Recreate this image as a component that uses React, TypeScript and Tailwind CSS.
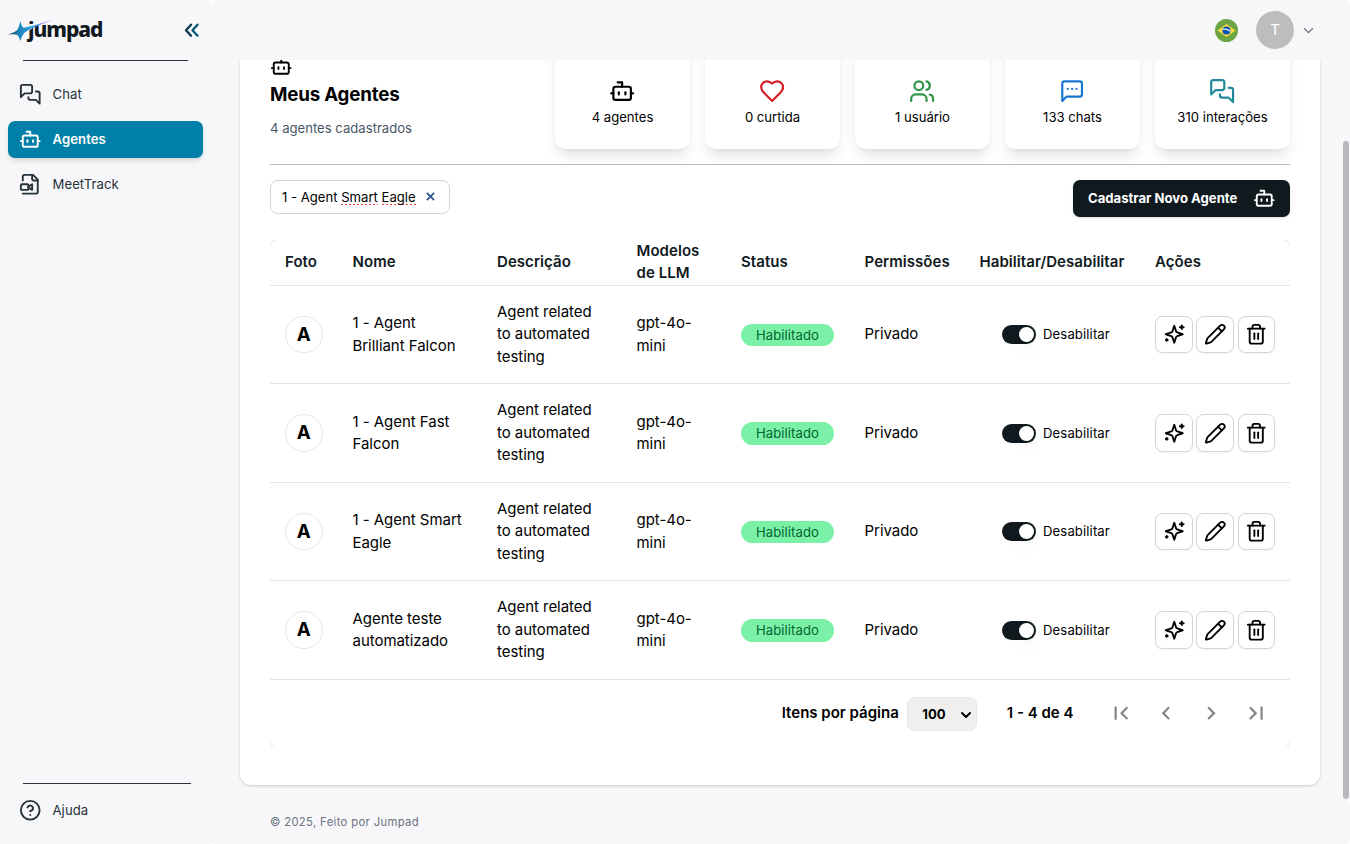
import React from "react";

type IconProps = { className?: string; sw?: number; children?: React.ReactNode };

function Icon({ className = "", sw = 2, children }: IconProps) {
  return (
    <svg viewBox="0 0 24 24" fill="none" stroke="currentColor" strokeWidth={sw} strokeLinecap="round" strokeLinejoin="round" className={"block shrink-0 " + className}>
      {children}
    </svg>
  );
}

const Bot = (p: IconProps) => (
  <Icon {...p}>
    <path d="M12 8V4H8" />
    <rect width="16" height="12" x="4" y="8" rx="2" />
    <path d="M2 14h2" /><path d="M20 14h2" /><path d="M15 13v2" /><path d="M9 13v2" />
  </Icon>
);
const Messages = (p: IconProps) => (
  <Icon {...p}>
    <path d="M14 9a2 2 0 0 1-2 2H6l-4 4V4a2 2 0 0 1 2-2h8a2 2 0 0 1 2 2z" />
    <path d="M18 9h2a2 2 0 0 1 2 2v11l-4-4h-6a2 2 0 0 1-2-2v-1" />
  </Icon>
);
const MessageMore = (p: IconProps) => (
  <Icon {...p}>
    <path d="M21 15a2 2 0 0 1-2 2H7l-4 4V5a2 2 0 0 1 2-2h14a2 2 0 0 1 2 2z" />
    <path d="M8 10h.01" /><path d="M12 10h.01" /><path d="M16 10h.01" />
  </Icon>
);
const FileVideo = (p: IconProps) => (
  <Icon {...p}>
    <path d="M4 22h14a2 2 0 0 0 2-2V7l-5-5H6a2 2 0 0 0-2 2v4" />
    <path d="M14 2v4a2 2 0 0 0 2 2h4" />
    <rect width="8" height="6" x="2" y="12" rx="1" />
    <path d="m10 15.500 4 2.500v-6l-4 2.500" />
  </Icon>
);
const Heart = (p: IconProps) => (
  <Icon {...p}>
    <path d="M19 14c1.490-1.460 3-3.210 3-5.500A5.500 5.500 0 0 0 16.500 3c-1.760 0-3 .5-4.500 2-1.500-1.500-2.740-2-4.500-2A5.500 5.500 0 0 0 2 8.500c0 2.300 1.500 4.050 3 5.500l7 7Z" />
  </Icon>
);
const Users = (p: IconProps) => (
  <Icon {...p}>
    <path d="M16 21v-2a4 4 0 0 0-4-4H6a4 4 0 0 0-4 4v2" />
    <circle cx="9" cy="7" r="4" />
    <path d="M22 21v-2a4 4 0 0 0-3-3.870" /><path d="M16 3.130a4 4 0 0 1 0 7.750" />
  </Icon>
);
const Help = (p: IconProps) => (
  <Icon {...p}>
    <circle cx="12" cy="12" r="10" />
    <path d="M9.090 9a3 3 0 0 1 5.830 1c0 2-3 3-3 3" /><path d="M12 17h.01" />
  </Icon>
);
const Sparkles = (p: IconProps) => (
  <Icon {...p}>
    <path d="m12 3-1.900 5.800a2 2 0 0 1-1.287 1.288L3 12l5.800 1.900a2 2 0 0 1 1.288 1.287L12 21l1.900-5.800a2 2 0 0 1 1.287-1.288L21 12l-5.800-1.900a2 2 0 0 1-1.288-1.287Z" />
    <path d="M20 2.500v4" /><path d="M22 4.500h-4" /><path d="M4 17v2" /><path d="M5 18H3" />
  </Icon>
);
const Pencil = (p: IconProps) => (
  <Icon {...p}>
    <path d="M21.174 6.812a1 1 0 0 0-3.986-3.987L3.842 16.174a2 2 0 0 0-.5.830l-1.321 4.352a.5.5 0 0 0 .623.622l4.353-1.320a2 2 0 0 0 .830-.497z" />
    <path d="m15 5 4 4" />
  </Icon>
);
const Trash = (p: IconProps) => (
  <Icon {...p}>
    <path d="M3 6h18" /><path d="M19 6v14c0 1-1 2-2 2H7c-1 0-2-1-2-2V6" />
    <path d="M8 6V4c0-1 1-2 2-2h4c1 0 2 1 2 2v2" /><path d="M10 11v6" /><path d="M14 11v6" />
  </Icon>
);

function Logo() {
  return (
    <div className="relative h-[30px] w-[98px]">
      <span className="absolute left-[20px] top-px font-['Noto_Sans',sans-serif] text-[21px] leading-[26px] font-extrabold tracking-[-1.050px] text-[#11191f]">jumpad</span>
      <svg viewBox="0 0 50 24" className="absolute top-[3px] left-0 h-[24px] w-[50px]">
        <defs>
          <linearGradient id="star" x1="0" y1="0" x2="1" y2="0">
            <stop offset="0" stopColor="#12304a" /><stop offset="0.220" stopColor="#1b7fb5" />
            <stop offset="0.500" stopColor="#2aa5e6" /><stop offset="0.780" stopColor="#7b74e0" /><stop offset="1" stopColor="#e2b5ec" />
          </linearGradient>
        </defs>
        <path d="M18 14.500 L22 6.500 L28 5 L27 8.500 L24 10.500 Z" fill="#f7f7f9" />
        <path d="M0 16.500 Q8 14 9.500 11.500 Q11.500 8 12.300 3 Q13.300 8 15.500 9.700 Q30 7 46.500 1 Q32 6.800 24 10.300 Q17.500 13.300 15.500 16 Q13.500 18.500 12.300 23 Q11.200 18.500 9.500 17 Q7 16 0 16.500 Z" fill="url(#star)" />
      </svg>
    </div>
  );
}

function NavItem({ icon, label, active = false }: { icon: React.ReactNode; label: string; active?: boolean }) {
  return (
    <div className={"flex h-[37px] w-[195px] items-center gap-[11px] rounded-[7px] pl-[11px] text-[13.125px] tracking-[0.080px] " + (active ? "bg-[#0080a8] font-semibold text-white shadow-md" : "text-[#26323a]")}>
      {icon}
      <span>{label}</span>
    </div>
  );
}

function Stat({ icon, label }: { icon: React.ReactNode; label: string }) {
  return (
    <div className="flex h-[119px] w-[135px] flex-col items-center justify-center gap-px rounded-[11px] bg-white pt-[41px] pb-[14px] text-[13.125px] leading-[22px] shadow-[0_10px_15px_-3px_rgba(0,0,0,0.1),0_4px_6px_-4px_rgba(0,0,0,0.1)]">
      {icon}
      <span>{label}</span>
    </div>
  );
}

const cols = "grid grid-cols-[67.500px_144.500px_139.500px_104.500px_123.500px_115px_175.500px_150px] items-center";

const agents: [string, string][] = [
  ["1 - Agent", "Brilliant Falcon"],
  ["1 - Agent Fast", "Falcon"],
  ["1 - Agent Smart", "Eagle"],
  ["Agente teste", "automatizado"],
];

function ActionButton({ children }: { children: React.ReactNode }) {
  return <button className="flex h-[37.500px] w-[37.500px] shrink-0 items-center justify-center rounded-[7.500px] border border-[#d1d5db] bg-white shadow-xs">{children}</button>;
}

function Row({ name }: { name: [string, string] }) {
  return (
    <div className={cols + " h-[98.500px] shrink-0 border-b border-[#e2e4e6] leading-[22.500px] tracking-[-0.040px]"}>
      <div className="pl-[15px]">
        <div className="flex h-[37.500px] w-[37.500px] items-center justify-center rounded-full border border-[#e5e7eb] pt-px text-[18.750px] font-bold">A</div>
      </div>
      <div className="pl-[15px]">{name[0]}<br />{name[1]}</div>
      <div className="pl-[15px]">Agent related<br />to automated<br />testing</div>
      <div className="pl-[15px]">gpt-4o-<br />mini</div>
      <div className="pt-px pl-[15px]">
        <div className="flex h-[22.500px] w-[93px] items-center justify-center rounded-full bg-[#7bf1a8] text-[13.125px] tracking-[0.080px] text-[#016630]">Habilitado</div>
      </div>
      <div className="pl-[15px]">Privado</div>
      <div className="flex items-center gap-[7px] pl-[37.500px] text-[13.125px] tracking-[0.120px]">
        <div className="flex h-[19px] w-[34px] items-center justify-end rounded-full bg-[#0f191e] p-[2px]">
          <div className="h-[15px] w-[15px] rounded-full bg-white shadow-lg" />
        </div>
        Desabilitar
      </div>
      <div className="flex gap-[3.750px] pl-[15.100px]">
        <ActionButton><Sparkles className="size-[22.500px]" /></ActionButton>
        <ActionButton><Pencil className="size-[22.500px]" /></ActionButton>
        <ActionButton><Trash className="size-[22.500px]" /></ActionButton>
      </div>
    </div>
  );
}

function Flag() {
  return (
    <svg viewBox="0 0 36 36" className="size-[23px]">
      <circle cx="18" cy="18" r="18" fill="#6da544" />
      <path d="M18 8 32 18 18 28 4 18Z" fill="#ffda44" />
      <circle cx="18" cy="18" r="6.300" fill="#0052b4" />
      <path d="M12 16.200q7-1.500 12 3" stroke="#f0f0f0" strokeWidth="1.800" fill="none" />
    </svg>
  );
}

function Misspelled({ children }: { children: React.ReactNode }) {
  return <span className="bg-[repeating-linear-gradient(90deg,#f03c3c_0_2px,transparent_2px_4px)] bg-[length:100%_1px] bg-bottom bg-no-repeat">{children}</span>;
}

export default function App() {
  return (
    <div className="flex h-[844px] w-[1350px] overflow-hidden bg-white font-[Inter,sans-serif] text-[15px] text-black">
      <aside className="flex h-full w-[210px] shrink-0 flex-col bg-[#f7f7f9] pl-2">
        <div className="flex h-[60px] items-center justify-between pr-[10px]">
          <Logo />
          <svg viewBox="0 0 16 16" className="size-4" fill="none" strokeWidth="2.300" strokeLinecap="round" strokeLinejoin="round">
            <path d="M7 2.700 2 8.200l5 5.500" stroke="#0b3651" /><path d="M13.500 2.700 8.500 8.200l5 5.500" stroke="#075a75" />
          </svg>
        </div>
        <div className="ml-[15px] h-px w-[165px] bg-[#26323a]" />
        <nav className="mt-[15px] flex flex-col gap-2">
          <NavItem icon={<Messages className="size-[22.500px]" />} label="Chat" />
          <NavItem active icon={<Bot className="size-[22.500px]" />} label="Agentes" />
          <NavItem icon={<FileVideo className="size-[22.500px]" />} label="MeetTrack" />
        </nav>
        <div className="mt-auto ml-[15px] h-px w-[168px] bg-[#26323a]" />
        <div className="mt-[8px] mb-[15px]">
          <NavItem icon={<Help className="size-[22.500px]" />} label="Ajuda" />
        </div>
      </aside>

      <div className="flex min-w-0 flex-1 flex-col">
        <header className="flex h-[60px] shrink-0 items-center justify-end rounded-t-[6px] bg-[#f7f7f9] pr-[35px]">
          <Flag />
          <div className="ml-[18px] flex size-[38px] items-center justify-center rounded-full bg-[#bdbdbd] text-[15px] text-white">T</div>
          <Icon className="ml-[8px] size-[13px] text-[#5b6070]"><path d="m4.500 8.500 7.500 7.500 7.500-7.500" /></Icon>
        </header>

        <div className="flex h-[740px] shrink-0 bg-[#f7f7f9]">
          <main className="flex flex-1 flex-col overflow-hidden pl-[30px]">
            <section className="flex h-[725px] w-[1080px] shrink-0 flex-col rounded-b-[11px] bg-white px-[30px] shadow-[0_1px_3px_rgba(0,0,0,0.15),0_1px_2px_-1px_rgba(0,0,0,0.15)]">
              <div className="flex h-[105px] shrink-0 justify-between border-b border-[#bcbec3]">
                <div className="-mt-[5px] flex flex-col">
                  <Bot className="size-[22.500px]" />
                  <h1 className="mt-[2px] text-[18.750px] leading-[30px] font-bold tracking-[-0.200px]">Meus Agentes</h1>
                  <p className="mt-[9px] text-[13.125px] leading-[19px] text-[#4a5565]">4 agentes cadastrados</p>
                </div>
                <div className="-mt-[30px] flex gap-[15px]">
                  <Stat icon={<Bot className="size-[26.250px]" />} label="4 agentes" />
                  <Stat icon={<Heart className="size-[26.250px] text-[#d61f26]" />} label="0 curtida" />
                  <Stat icon={<Users className="size-[26.250px] text-[#2f9348]" />} label="1 usuário" />
                  <Stat icon={<MessageMore className="size-[26.250px] text-[#1976d2]" />} label="133 chats" />
                  <Stat icon={<Messages className="size-[26.250px] text-[#238a9c]" />} label="310 interações" />
                </div>
              </div>

              <div className="mt-[15px] flex h-[37px] shrink-0 items-start justify-between">
                <div className="flex h-[34px] w-[180px] items-center rounded-[7.500px] border border-[#d1d5db] pt-px pl-[11px] text-[13.125px]">
                  <span>1 - Agent <Misspelled>Smart</Misspelled> <Misspelled>Eagle</Misspelled></span>
                  <svg viewBox="0 0 10 10" className="mb-[2px] ml-[10px] size-[9px]" stroke="#33548f" strokeWidth="2"><path d="m1 1 8 8M9 1 1 9" /></svg>
                </div>
                <button className="flex h-[37px] w-[217px] items-center justify-between rounded-[7px] bg-[#0f191e] pr-[15px] pl-[15px] text-[13.125px] font-bold text-white shadow-sm">
                  Cadastrar Novo Agente
                  <Bot className="size-[22.500px]" />
                </button>
              </div>

              <div className="relative mt-[23px] flex h-[507px] shrink-0 flex-col">
                <span className="absolute top-0 left-0 size-[5px] rounded-tl-[5px] border-t border-l border-[#e5e7eb]" />
                <span className="absolute top-0 right-0 size-[5px] rounded-tr-[5px] border-t border-r border-[#e5e7eb]" />
                <span className="absolute bottom-0 left-0 size-[5px] rounded-bl-[5px] border-b border-l border-[#e5e7eb]" />
                <span className="absolute right-0 bottom-0 size-[5px] rounded-br-[5px] border-r border-b border-[#e5e7eb]" />
                <div className={cols + " h-[45.900px] shrink-0 border-b border-[#e2e4e6] leading-[22px] font-semibold text-[#0f191e] tracking-[0.060px]"}>
                  <div className="pl-[15px]">Foto</div>
                  <div className="pl-[15px]">Nome</div>
                  <div className="pl-[15px]">Descrição</div>
                  <div className="pl-[15px]">Modelos<br />de LLM</div>
                  <div className="pl-[15px]">Status</div>
                  <div className="pl-[15px]">Permissões</div>
                  <div className="pl-[15px]">Habilitar/Desabilitar</div>
                  <div className="pl-[15px]">Ações</div>
                </div>
                {agents.map((a) => <Row key={a.join(" ")} name={a} />)}
                <div className="flex h-[67px] items-center justify-end pr-[21px] font-semibold">
                  <span>Itens por página</span>
                  <div className="mt-[2px] ml-[8px] flex h-[34px] w-[70px] items-center justify-between rounded-[7.500px] border border-[#e5e7eb] bg-[#f0efee] pt-px pr-[4px] pl-[14.500px] text-[13.125px] font-bold">
                    100
                    <Icon sw={4} className="size-[12px]"><path d="m4 8 8 8 8-8" /></Icon>
                  </div>
                  <span className="ml-[30px]">1 - 4 de 4</span>
                  <div className="ml-[34.300px] flex gap-[18.750px] text-[#858585]">
                    <svg viewBox="0 0 24 24" className="size-[26.250px]" fill="currentColor"><path d="M18.410 16.590 13.820 12l4.590-4.590L17 6l-6 6 6 6zM6 6h2v12H6z" /></svg>
                    <svg viewBox="0 0 24 24" className="size-[26.250px]" fill="currentColor"><path d="M15.410 7.410 14 6l-6 6 6 6 1.410-1.410L10.830 12z" /></svg>
                    <svg viewBox="0 0 24 24" className="size-[26.250px]" fill="currentColor"><path d="M10 6 8.590 7.410 13.170 12l-4.580 4.590L10 18l6-6z" /></svg>
                    <svg viewBox="0 0 24 24" className="size-[26.250px]" fill="currentColor"><path d="M5.590 7.410 10.180 12l-4.590 4.590L7 18l6-6-6-6zM16 6h2v12h-2z" /></svg>
                  </div>
                </div>
              </div>
            </section>
          </main>
          <div className="mt-[81px] mr-[1px] h-[658px] w-[6px] shrink-0 rounded-full bg-[#bab8be]" />
        </div>
        <footer className="flex h-[44px] shrink-0 items-center rounded-[5px] bg-[#f7f7f9] pl-[60px] text-[11.250px] tracking-[0.360px] text-[#6a7282]">© 2025, Feito por Jumpad</footer>
      </div>
    </div>
  );
}
